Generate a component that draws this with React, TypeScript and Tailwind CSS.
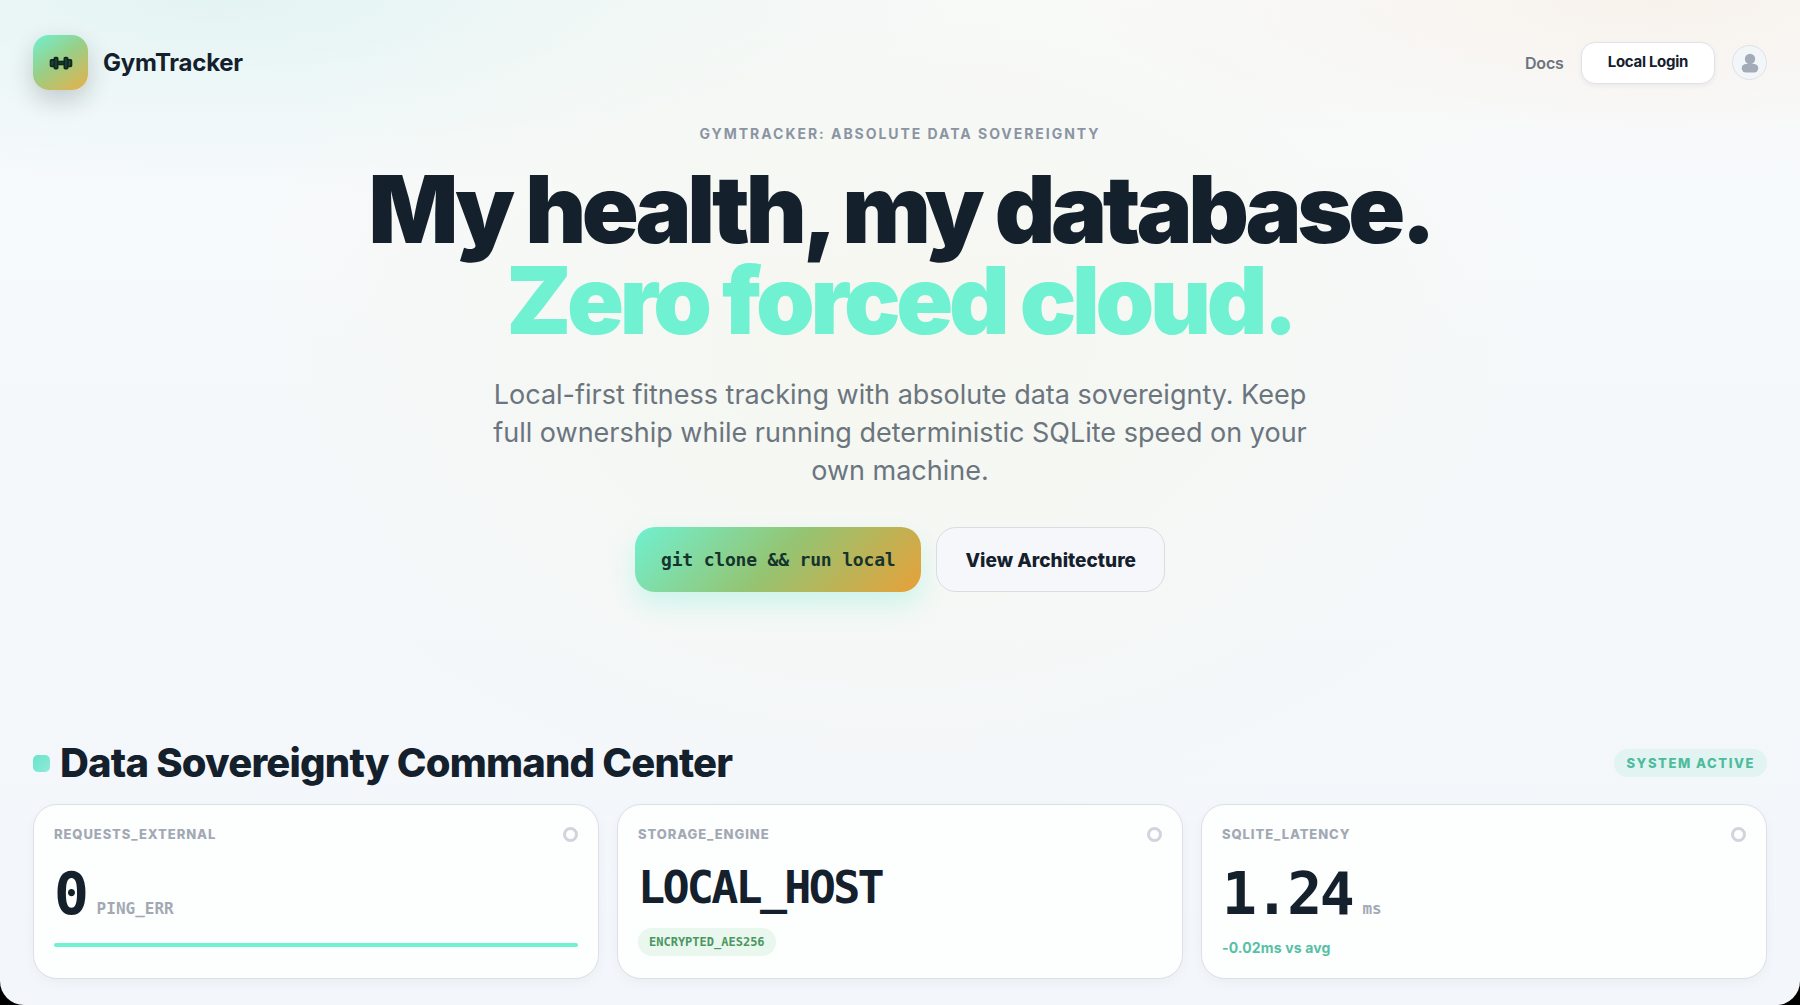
import React from "react";

const sans = "font-['Inter',sans-serif]";
const mono = "font-['DejaVu_Sans_Mono',monospace]";

function Dumbbell() {
  return (
    <svg width="24" height="16" viewBox="0 0 24 16" aria-hidden="true">
      <g fill="#1d4a38" stroke="#10271f" strokeWidth="1.8">
        <rect x="8" y="6.6" width="8" height="2.8" />
        <rect x="1.6" y="4.9" width="4" height="6.4" rx="0.8" />
        <rect x="18.4" y="4.9" width="4" height="6.4" rx="0.8" />
        <rect x="5.4" y="2.6" width="3.2" height="11" rx="0.8" />
        <rect x="15.4" y="2.6" width="3.2" height="11" rx="0.8" />
      </g>
    </svg>
  );
}

function Card({ label, children }: { label: string; children: React.ReactNode }) {
  return (
    <article className="flex h-[175px] flex-col rounded-3xl border border-[#dce0e6] bg-[#fdfefe] px-5 pt-5 shadow-[0_4px_12px_rgba(20,32,44,0.04)]">
      <div className="flex items-center justify-between">
        <h3 className="text-[13px] leading-[18px] font-extrabold tracking-[0.07em] text-[#a2a9b4]">{label}</h3>
        <span className="size-[15px] rounded-full border-[3px] border-[#d0d4dc]" />
      </div>
      {children}
    </article>
  );
}

export default function App() {
  return (
    <div className="min-h-screen bg-black">
      <div
        className={`${sans} flex min-h-screen flex-col rounded-b-[24px] bg-[radial-gradient(ellipse_680px_480px_at_50%_34%,#f6f7f0_0%,#f6f7f0b0_40%,#f6f7f000_100%),radial-gradient(ellipse_800px_200px_at_12%_0%,#e4f4f3_0%,#e4f4f300_100%),radial-gradient(ellipse_600px_160px_at_92%_0%,#f8f2ec_0%,#f8f2ec00_100%),linear-gradient(#f9fbfc,#f4f8fb_50%,#f3f6fa)] text-[#14202c]`}
      >
        <header className="flex items-center justify-between px-[33px] pt-[35px]">
          <a href="#" className="flex items-center gap-[15px]">
            <span className="flex size-[55px] items-center justify-center rounded-2xl bg-[linear-gradient(145deg,#70f0d0,#98cf88_45%,#e8b048)] shadow-[0_10px_24px_rgba(20,32,44,0.2)]">
              <Dumbbell />
            </span>
            <span className="text-2xl font-bold tracking-[-0.01em]">GymTracker</span>
          </a>
          <nav className="flex items-center gap-[17px]">
            <a href="#" className="text-base font-semibold tracking-[-0.01em] text-[#6b737d]">Docs</a>
            <button className="h-[42px] rounded-[14px] border border-[#dfe3e8] bg-white px-[26px] text-[15px] font-bold tracking-[-0.02em] shadow-[0_2px_5px_rgba(20,32,44,0.06)]">
              Local Login
            </button>
            <button aria-label="Account" className="flex size-[35px] items-center justify-center rounded-full border border-[#dde2e8] bg-[#f3f6f9]">
              <svg width="18" height="20" viewBox="0 0 18 20" fill="#a4abb8" aria-hidden="true">
                <circle cx="9" cy="6" r="5.2" />
                <rect x="0.7" y="11" width="16.6" height="8.5" rx="4.2" />
              </svg>
            </button>
          </nav>
        </header>

        <main className="flex flex-1 flex-col">
          <section className="flex flex-col items-center pt-[34px] text-center">
            <p className="text-sm leading-5 font-bold tracking-[0.14em] text-[#8a94a3]">GYMTRACKER: ABSOLUTE DATA SOVEREIGNTY</p>
            <h1 className="mt-5 text-[94px] leading-[91px] font-black tracking-[-0.046em]">
              My health, my database.
              <span className="block text-[#70f1d1]">Zero forced cloud.</span>
            </h1>
            <p className="mt-[30px] max-w-[840px] text-[27px] leading-[38px] text-[#6b757e]">
              Local-first fitness tracking with absolute data sovereignty. Keep full ownership while running deterministic SQLite speed on your own machine.
            </p>
            <div className="mt-[37px] flex gap-[15px]">
              <button className={`${mono} h-[65px] rounded-[20px] bg-[linear-gradient(135deg,#70f0d0,#95c472_50%,#e8a038)] px-[26px] text-lg font-bold tracking-[-0.01em] text-[#15342e] shadow-[0_12px_24px_rgba(112,240,208,0.3)]`}>
                git clone &amp;&amp; run local
              </button>
              <button className="h-[65px] rounded-[20px] border border-[#d9dce1] bg-[#f6f7fa] px-7 pt-1 text-[19px] font-extrabold">View Architecture</button>
            </div>
          </section>

          <section className="mt-auto px-[33px] pb-[26px]">
            <div className="flex items-center justify-between">
              <h2 className="flex items-center gap-[10px] text-[40px] leading-[48px] font-extrabold tracking-[-0.02em]">
                <span className="size-[17px] rounded-[5px] bg-[linear-gradient(135deg,#68e4cb,#90ead8)]" />
                Data Sovereignty Command Center
              </h2>
              <span className="rounded-full bg-[#e1f4f1] px-3 py-[5px] text-[13px] leading-[18px] font-extrabold tracking-[0.12em] text-[#4dbb9d]">SYSTEM ACTIVE</span>
            </div>
            <div className="mt-[17px] grid grid-cols-3 gap-[18px]">
              <Card label="REQUESTS_EXTERNAL">
                <p className={`${mono} mt-[17px] flex items-baseline gap-[10px] font-bold`}>
                  <span className="text-[58px] leading-[68px] tracking-[-0.04em]">0</span>
                  <span className="text-base text-[#a2a9b4]">PING_ERR</span>
                </p>
                <div className="mt-[15px] h-1 rounded-full bg-[#70f1d1]" />
              </Card>
              <Card label="STORAGE_ENGINE">
                <p className={`${mono} mt-[17px] text-[45px] leading-[56px] font-bold tracking-[-0.06em]`}>LOCAL_HOST</p>
                <span className={`${mono} mt-3 self-start rounded-full bg-[#e9f7ef] px-[11px] py-[5px] text-xs leading-[18px] font-bold text-[#4a9760]`}>ENCRYPTED_AES256</span>
              </Card>
              <Card label="SQLITE_LATENCY">
                <p className={`${mono} mt-[17px] flex items-baseline gap-[10px] font-bold`}>
                  <span className="text-[58px] leading-[68px] tracking-[-0.04em]">1.24</span>
                  <span className="text-base text-[#a2a9b4]">ms</span>
                </p>
                <p className="mt-[10px] text-sm leading-5 font-bold tracking-[0.01em] text-[#56c0a6]">-0.02ms vs avg</p>
              </Card>
            </div>
          </section>
        </main>
      </div>
    </div>
  );
}
